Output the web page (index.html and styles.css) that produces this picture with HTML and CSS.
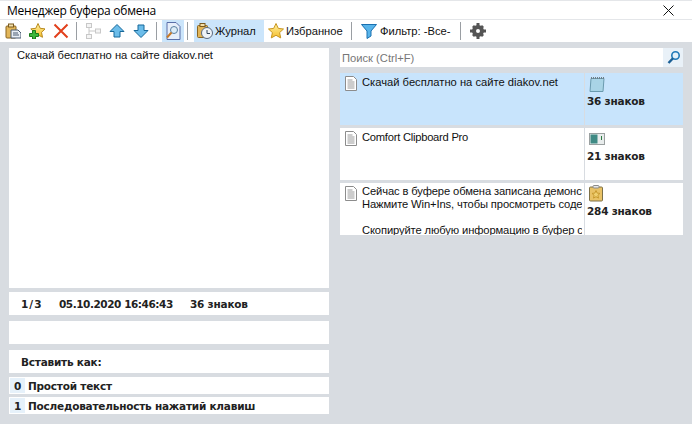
FILE: index.html
```html
<!DOCTYPE html>
<html lang="ru">
<head>
<meta charset="utf-8">
<title>Менеджер буфера обмена</title>
<link rel="stylesheet" href="styles.css">
</head>
<body>
<div class="window">
  <header class="titlebar">
    <span class="title">Менеджер буфера обмена</span>
    <svg class="close" width="11" height="11" viewBox="0 0 11 11"><path d="M.5.5L10.500 10.500M10.500.5L.5 10.500" stroke="#111" stroke-width="1" fill="none"/></svg>
  </header>
  <nav class="toolbar">
    <span class="tool">
      <svg width="16" height="16" viewBox="0 0 16 16"><rect x="1" y="3" width="10" height="12" rx="1" fill="#e2b659" stroke="#8a6420"/><rect x="3.500" y="1" width="5" height="3" fill="#f3e0ab" stroke="#7a5a20"/><path d="M6 7h7l3 3v5H6z" fill="#e8eef5" stroke="#4a5a70"/><path d="M8 10h5M8 12h6" stroke="#4a5a70"/></svg>
    </span>
    <span class="tool">
      <svg width="16" height="16" viewBox="0 0 16 16"><defs><linearGradient id="gold1" x1="0" y1="0" x2="0" y2="1"><stop offset="0" stop-color="#fff0a0"/><stop offset="1" stop-color="#f5bf2e"/></linearGradient></defs><path d="M9 .5l2.200 4.800 5 .6-3.700 3.400 1 5-4.500-2.500-4.500 2.500 1-5L1.800 5.900l5-.6z" fill="url(#gold1)" stroke="#b98a1e"/><path d="M3.500 7.500h3v3h3v3h-3v2.500h-3v-2.500H.5v-3h3z" fill="#3cb83c" stroke="#1c7a1c"/></svg>
    </span>
    <span class="tool">
      <svg width="16" height="16" viewBox="0 0 16 16"><path d="M1.500 1.500L14.500 14.500M14.500 1.500L1.500 14.500" stroke="#e2401c" stroke-width="2" fill="none"/></svg>
    </span>
    <i class="sep sep-a"></i>
    <span class="tool">
      <svg width="16" height="16" viewBox="0 0 16 16"><g fill="#f4f4f4" stroke="#c8c8c8"><rect x="1.500" y=".5" width="5" height="4"/><rect x="1.500" y="11.500" width="5" height="4"/><rect x="10.500" y="6" width="5" height="4"/></g><path d="M4 4.500v7M4 8h6.500" stroke="#c8c8c8" fill="none"/></svg>
    </span>
    <span class="tool">
      <svg width="16" height="16" viewBox="0 0 16 16"><path d="M8 1.500L15 8.500H11V14H5V8.500H1z" fill="#6cbdea" stroke="#16689a"/></svg>
    </span>
    <span class="tool">
      <svg width="16" height="16" viewBox="0 0 16 16"><path d="M8 14.500L15 7.500H11V2H5V7.500H1z" fill="#6cbdea" stroke="#16689a"/></svg>
    </span>
    <i class="sep sep-b"></i>
    <span class="tool tool-active">
      <svg width="16" height="18" viewBox="0 0 16 18"><path d="M2 .5h9l4 4v13H2z" fill="#e6eefa" stroke="#5a6ea8"/><circle cx="9" cy="8" r="3.500" fill="#dcecf8" stroke="#5a7fa0"/><path d="M6.500 10.500L2 15.500" stroke="#c77a28" stroke-width="2"/></svg>
    </span>
    <i class="sep sep-c"></i>
    <span class="tab tab-active">
      <svg width="16" height="16" viewBox="0 0 16 16"><rect x=".5" y="2.500" width="10" height="12" rx="1" fill="#e2b659" stroke="#8a6420"/><rect x="3" y=".5" width="5" height="3" fill="#f3e0ab" stroke="#7a5a20"/><circle cx="10" cy="10" r="5.500" fill="#eef3f8" stroke="#5a6a80"/><path d="M10 7v3.500h3" stroke="#33475e" fill="none"/></svg>
      <span>Журнал</span>
    </span>
    <span class="tab tab-fav">
      <svg width="16" height="16" viewBox="0 0 16 16"><defs><linearGradient id="gold2" x1="0" y1="0" x2="0" y2="1"><stop offset="0" stop-color="#fff0a0"/><stop offset="1" stop-color="#f5bf2e"/></linearGradient></defs><path d="M8 .5l2.300 4.900 5.200.6-3.900 3.600 1.100 5.300L8 12.300l-4.700 2.600 1.100-5.300L.5 6l5.200-.6z" fill="url(#gold2)" stroke="#c8951f"/></svg>
      <span>Избранное</span>
    </span>
    <i class="sep sep-d"></i>
    <span class="tab tab-filter">
      <svg width="16" height="16" viewBox="0 0 16 16"><path d="M.5 1.500h15L10 8v5l-4 2.500V8z" fill="#58b4ea" stroke="#1a70b0"/></svg>
      <span>Фильтр: -Все-</span>
    </span>
    <i class="sep sep-d"></i>
    <span class="tool gear">
      <svg width="16" height="16" viewBox="0 0 16 16"><path d="M8 2a6 6 0 1 0 0 12A6 6 0 0 0 8 2zm0 4a2 2 0 1 1 0 4 2 2 0 0 1 0-4z" fill="#555" fill-rule="evenodd"/><path d="M6.500 0h3v3h-3zM6.500 13h3v3h-3zM0 6.500h3v3H0zM13 6.500h3v3h-3zM2 4l2-2 2 2-2 2zM10 4l2-2 2 2-2 2zM2 12l2-2 2 2-2 2zM10 12l2-2 2 2-2 2z" fill="#555"/></svg>
    </span>
  </nav>
  <main class="content">
    <section class="left">
      <div class="preview">Скачай бесплатно на сайте diakov.net</div>
      <div class="info"><span class="pos">1/3</span><span class="date">05.10.2020 16:46:43</span><span>36 знаков</span></div>
      <div class="blank"></div>
      <div class="paste-head">Вставить как:</div>
      <div class="paste-opt first"><span class="key">0</span><span>Простой текст</span></div>
      <div class="paste-opt"><span class="key">1</span><span>Последовательность нажатий клавиш</span></div>
    </section>
    <section class="right">
      <div class="search">
        <span class="search-hint">Поиск (Ctrl+F)</span>
        <span class="search-btn"><svg width="15" height="15" viewBox="0 0 15 15"><circle cx="9.500" cy="5.500" r="3.700" fill="#e4f1fa" stroke="#1f79b8" stroke-width="1.600"/><path d="M7 8.200L2.500 13" stroke="#1a5f95" stroke-width="2.400"/></svg></span>
      </div>
      <article class="item selected">
        <div class="item-main">
          <svg class="doc" width="12" height="15" viewBox="0 0 12 15"><path d="M.5.5h8l3 3v11H.5z" fill="#fff" stroke="#8c8c8c"/><path d="M2.500 4h5M2.500 6h7M2.500 8h7M2.500 10h7M2.500 12h7" stroke="#9a9a9a"/></svg>
          <div class="item-text"><p>Скачай бесплатно на сайте diakov.net</p></div>
        </div>
        <div class="item-side">
          <svg class="side-icon" width="16" height="16" viewBox="0 0 16 16"><path d="M2 2.500h13l-1 13H1z" fill="#a9d4e6" stroke="#6a9aae"/><path d="M2.500 1v2M4.500 1v2M6.500 1v2M8.500 1v2M10.500 1v2M12.500 1v2M14.500 1v2" stroke="#6f7f88"/></svg>
          <b>36 знаков</b>
        </div>
      </article>
      <article class="item">
        <div class="item-main">
          <svg class="doc" width="12" height="15" viewBox="0 0 12 15"><path d="M.5.5h8l3 3v11H.5z" fill="#fff" stroke="#8c8c8c"/><path d="M2.500 4h5M2.500 6h7M2.500 8h7M2.500 10h7M2.500 12h7" stroke="#9a9a9a"/></svg>
          <div class="item-text"><p class="latin">Comfort Clipboard Pro</p></div>
        </div>
        <div class="item-side">
          <svg class="side-icon" width="16" height="16" viewBox="0 0 16 16"><rect x=".5" y="2.500" width="15" height="11" fill="#e8ecec" stroke="#9aa0a0"/><rect x="1.500" y="3.500" width="7" height="9" fill="#3f8a84"/><rect x="12" y="5" width="1" height="4" fill="#2a7a40"/></svg>
          <b>21 знаков</b>
        </div>
      </article>
      <article class="item">
        <div class="item-main">
          <svg class="doc" width="12" height="15" viewBox="0 0 12 15"><path d="M.5.5h8l3 3v11H.5z" fill="#fff" stroke="#8c8c8c"/><path d="M2.500 4h5M2.500 6h7M2.500 8h7M2.500 10h7M2.500 12h7" stroke="#9a9a9a"/></svg>
          <div class="item-text long"><p>Сейчас в буфере обмена записана демонст</p><p>Нажмите Win+Ins, чтобы просмотреть соде</p><p>&nbsp;</p><p>Скопируйте любую информацию в буфер с</p></div>
        </div>
        <div class="item-side">
          <svg class="side-icon tall" width="15" height="17" viewBox="0 0 15 17"><rect x=".5" y="2" width="13" height="14" rx="1" fill="#e9c266" stroke="#7c7048"/><rect x="4" y=".5" width="6" height="2.500" rx="1" fill="#e8e8e8" stroke="#8c8c8c"/><path d="M7 5.500l1.200 2.600 2.800.3-2.100 1.900.6 2.800L7 11.700l-2.500 1.400.6-2.800L3 8.400l2.800-.3z" fill="#f0d070" stroke="#c89a30"/></svg>
          <b>284 знаков</b>
        </div>
      </article>
    </section>
  </main>
</div>
</body>
</html>
```
FILE: styles.css
```css
* { box-sizing: border-box; }
html, body { margin: 0; padding: 0; }
body {
  width: 692px;
  height: 424px;
  overflow: hidden;
  background: #d8dce1;
  font-family: "Liberation Sans", Arial, sans-serif;
  font-size: 11.2px;
  color: #111;
}
svg { display: block; flex: none; }
.window { display: flex; flex-direction: column; height: 424px; }

.titlebar {
  height: 20px;
  padding: 1px 18px 0 7px;
  background: #fff;
  border-top: 1px solid #e4e6e9;
  border-bottom: 1px solid #e4e6e9;
  display: flex;
  align-items: center;
  justify-content: space-between;
  font-family: "Open Sans", sans-serif;
  font-size: 12px;
  letter-spacing: -0.25px;
  color: #000;
}
.toolbar {
  height: 22px;
  background: #fff;
  display: flex;
  align-items: center;
  padding-left: 5px;
}
.tool { width: 16px; height: 22px; margin-right: 8px; display: flex; align-items: center; justify-content: center; }
.tool-active { width: 22px; margin: 0; background: #cbe5fb; }
.sep { display: block; width: 1px; height: 18px; background: #9a9ea3; }
.sep-a { margin: 0 8px 0 -1px; }
.sep-b { margin: 0 5px 0 -1px; }
.sep-c { margin: 0 6px 0 3px; }
.sep-d { margin: 0 9px 0 0; }
.tab { display: flex; align-items: center; height: 22px; gap: 3px; }
.tab-active { width: 70px; background: #cbe5fb; padding-left: 3px; gap: 2px; }
.tab-fav { margin-left: 4px; gap: 2px; width: 83px; }
.tab-filter { width: 99px; }
.gear { margin: 0; }

.content {
  flex: 1;
  display: flex;
  gap: 11px;
  padding: 6px 9px 0;
}
.left { width: 320px; display: flex; flex-direction: column; }
.preview {
  height: 240px;
  background: #fff;
  padding: 0 8px;
  line-height: 14px;
}
.info, .blank, .paste-head {
  height: 23px;
  background: #fff;
  margin-top: 6px;
  display: flex;
  align-items: center;
  padding-left: 12px;
  font-family: "DejaVu Sans", sans-serif;
  font-size: 10.5px;
  letter-spacing: -0.22px;
  font-weight: 700;
  color: #222;
}
.info { margin-top: 4px; }
.pos { width: 38px; letter-spacing: 1px; }
.date { width: 131px; letter-spacing: -0.45px; }
.paste-opt {
  height: 17px;
  margin-top: 3px;
  background: #fff;
  display: flex;
  align-items: center;
  padding-left: 1px;
  gap: 3px;
  font-family: "DejaVu Sans", sans-serif;
  font-weight: 700;
  font-size: 10.5px;
  letter-spacing: -0.22px;
  color: #222;
}
.paste-opt.first { margin-top: 4px; }
.key { width: 15px; height: 15px; background: #e6f1fa; display: flex; align-items: center; justify-content: center; }

.right { width: 343px; display: flex; flex-direction: column; }
.search {
  height: 19px;
  background: #fff;
  display: flex;
  align-items: center;
  justify-content: space-between;
  padding-left: 2px;
  margin-bottom: 6px;
  color: #777;
}
.search-btn { width: 20px; height: 19px; background: #e9f1f8; display: flex; align-items: center; justify-content: center; }
.item {
  height: 52px;
  background: #fff;
  display: flex;
  margin-bottom: 3px;
  overflow: hidden;
}
.item.selected { background: #c8e4fc; }
.item-main {
  width: 245px;
  display: flex;
  gap: 5px;
  padding: 2px 2px 0 5px;
  overflow: hidden;
  border-right: 1px solid #d8dce1;
}
.doc { margin-top: 1px; }
.item-text { min-width: 0; flex: 1; overflow: hidden; padding-top: 1px; }
.item-text.long { padding-top: 0; letter-spacing: -0.12px; }
.item-text p { margin: 0; line-height: 13px; white-space: nowrap; }
.item-text p.latin { letter-spacing: -0.25px; }
.item-side { flex: 1; padding: 3px 0 0 2px; display: flex; flex-direction: column; }
.side-icon { margin: 0 0 2px 2px; }
.side-icon.tall { margin-top: -1px; }
.item-side b { font-family: "DejaVu Sans", sans-serif; font-size: 10.5px; letter-spacing: -0.22px; color: #222; line-height: 14px; }
```
